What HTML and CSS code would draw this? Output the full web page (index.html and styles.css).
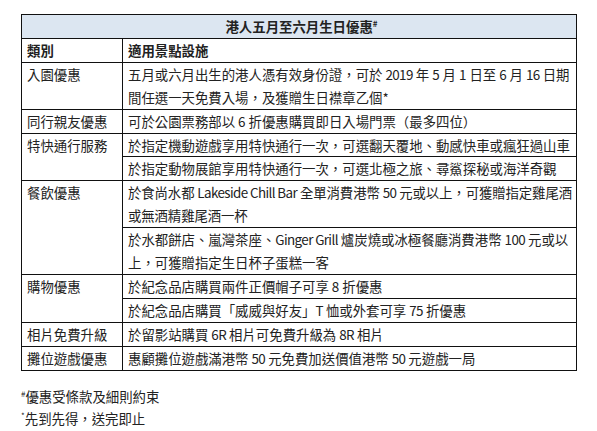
FILE: index.html
```html
<!DOCTYPE html>
<html lang="zh-Hant">
<head>
<meta charset="utf-8">
<title>港人五月至六月生日優惠</title>
<link rel="stylesheet" href="styles.css">
</head>
<body>
<div class="page">
  <table class="offers">
    <colgroup>
      <col class="col-cat">
      <col class="col-desc">
    </colgroup>
    <thead>
      <tr><th class="title" colspan="2">港人五月至六月生日優惠<sup class="mark">#</sup></th></tr>
      <tr><th class="head">類別</th><th class="head">適用景點設施</th></tr>
    </thead>
    <tbody>
      <tr><td>入園優惠</td><td>五月或六月出生的港人憑有效身份證，可於 <span class="en">2019</span> 年 5 月 1 日至 6 月 <span class="en">16</span> 日期間任選一天免費入場，及獲贈生日襟章乙個*</td></tr>
      <tr><td>同行親友優惠</td><td>可於公園票務部以 6 折優惠購買即日入場門票（最多四位）</td></tr>
      <tr><td rowspan="2">特快通行服務</td><td>於指定機動遊戲享用特快通行一次，可選翻天覆地、動感快車或瘋狂過山車</td></tr>
      <tr><td>於指定動物展館享用特快通行一次，可選北極之旅、尋鯊探秘或海洋奇觀</td></tr>
      <tr><td rowspan="2">餐飲優惠</td><td class="tight">於食尚水都 <span class="en">Lakeside Chill Bar</span> 全單消費港幣 <span class="en">50</span> 元或以上，可獲贈指定雞尾酒或無酒精雞尾酒一杯</td></tr>
      <tr><td>於水都餅店、嵐灣茶座、<span class="en">Ginger Grill</span> 爐炭燒或冰極餐廳消費港幣 <span class="en">100</span> 元或以上，可獲贈指定生日杯子蛋糕一客</td></tr>
      <tr><td rowspan="2">購物優惠</td><td>於紀念品店購買兩件正價帽子可享 8 折優惠</td></tr>
      <tr><td>於紀念品店購買「威威與好友」<span class="en">T</span> 恤或外套可享 <span class="en">75</span> 折優惠</td></tr>
      <tr><td>相片免費升級</td><td>於留影站購買 <span class="en">6R</span> 相片可免費升級為 <span class="en">8R</span> 相片</td></tr>
      <tr><td>攤位遊戲優惠</td><td>惠顧攤位遊戲滿港幣 <span class="en">50</span> 元免費加送價值港幣 <span class="en">50</span> 元遊戲一局</td></tr>
    </tbody>
  </table>
  <div class="notes">
    <p class="note"><sup class="mark">#</sup>優惠受條款及細則約束</p>
    <p class="note"><sup class="mark">*</sup>先到先得，送完即止</p>
  </div>
</div>
</body>
</html>
```

FILE: styles.css
```css
html, body {
  margin: 0;
  padding: 0;
  background: #ffffff;
}

body {
  font-family: "Noto Sans CJK TC", "Noto Sans", sans-serif;
  font-size: 13.4px;
  color: #222222;
}

.page {
  padding: 14px 0 0 21px;
}

.offers {
  width: 556px;
  border-collapse: collapse;
  table-layout: fixed;
}

.col-cat {
  width: 101px;
}

.offers th,
.offers td {
  border: 1px solid #111111;
  padding: 0 0 0 5px;
  line-height: 22.9px;
  text-align: left;
  vertical-align: top;
}

.offers th {
  font-weight: bold;
}

.offers .title {
  background: #dce6f1;
  text-align: center;
}

.offers .tight {
  letter-spacing: -0.1px;
}

.en {
  letter-spacing: -0.6px;
}

.mark {
  font-size: 8px;
  line-height: 0;
  vertical-align: 5px;
}

.notes {
  margin-top: 14px;
}

.note {
  margin: 0;
  line-height: 22.5px;
}
```
